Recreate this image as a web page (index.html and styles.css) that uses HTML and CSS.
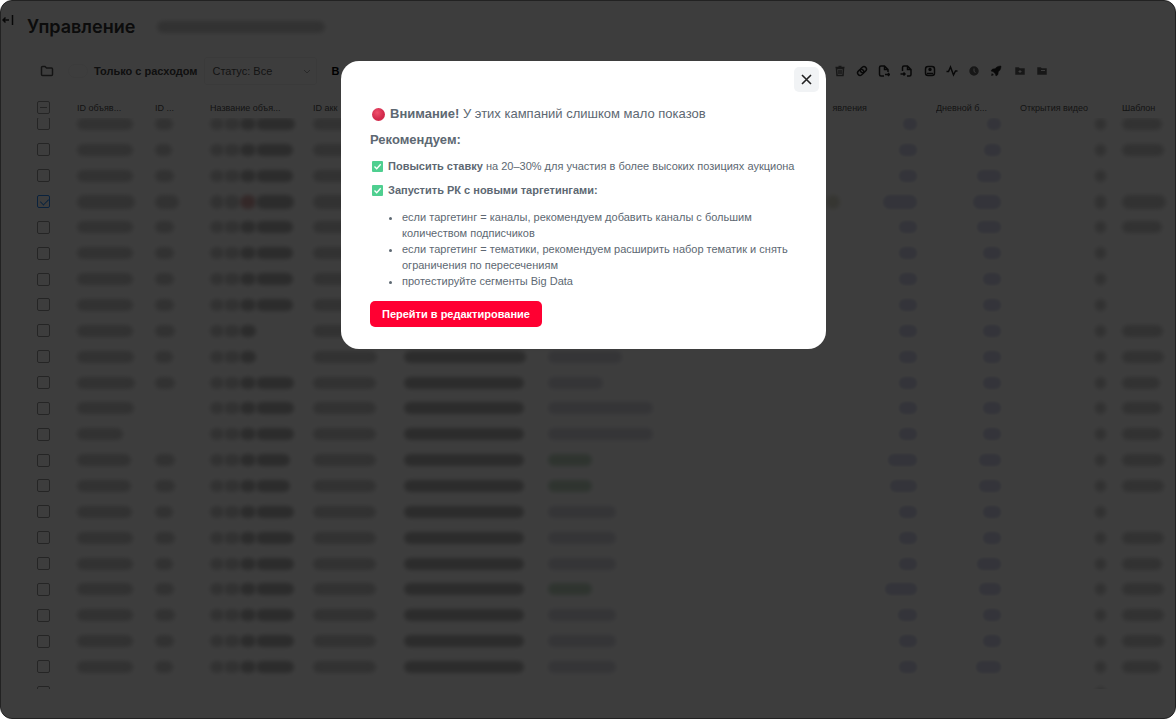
FILE: index.html
```
<!DOCTYPE html>
<html lang="ru">
<head>
  <meta charset="UTF-8">
  <meta name="viewport" content="width=device-width, initial-scale=1.0">
  <title>Управление</title>
  <link rel="stylesheet" href="styles.css">
</head>
<body>
  <div class="page">
    <header class="header">
      <button class="icon-btn collapse" aria-label="Развернуть меню">
        <svg width="12" height="12" viewBox="0 0 12 12"><path d="M7 6H1M3.500 3.500L1 6l2.500 2.500M10.500 1v10"/></svg>
      </button>
      <h1>Управление</h1>
      <span class="account blob"></span>
    </header>

    <div class="toolbar">
      <button class="icon-btn folder" aria-label="Папки">
        <svg width="14" height="12" viewBox="0 0 14 12"><path d="M1.500 9.500v-7a1 1 0 0 1 1-1h2.500l1.500 1.500h5a1 1 0 0 1 1 1v5.500a1 1 0 0 1-1 1h-9a1 1 0 0 1-1-1z"/></svg>
      </button>
      <label class="spend"><input type="checkbox" class="switch">Только с расходом</label>
      <div class="status-box">
        <select class="status" aria-label="Статус">
          <option>Статус: Все</option>
        </select>
        <svg class="chevron" width="8" height="5" viewBox="0 0 8 5"><path d="M1 1l3 3 3-3"/></svg>
      </div>
      <span class="period">В</span>
      <div class="actions">
        <button class="icon-btn dim" aria-label="Удалить"><svg viewBox="0 0 12 12"><path d="M2.500 3.500h7L9 10.500H3zM1.500 2.500h9M4.500 1.500h3M5 5v4M7 5v4"/></svg></button>
        <button class="icon-btn" aria-label="Ссылка"><svg viewBox="0 0 12 12"><rect x="4" y="2" width="6.500" height="5" rx="2.500" transform="rotate(-40 7.500 4.500)"/><rect x="1.500" y="5" width="6.500" height="5" rx="2.500" transform="rotate(-40 4.500 7.500)"/></svg></button>
        <button class="icon-btn" aria-label="Экспорт"><svg viewBox="0 0 12 12"><path d="M6 11H3a1.500 1.500 0 0 1-1.500-1.500v-7A1.500 1.500 0 0 1 3 1h3.500L10 4.500V7M6.500 1v3.500H10M7 9.500h4.500M10 8l1.500 1.500L10 11"/></svg></button>
        <button class="icon-btn" aria-label="Импорт"><svg viewBox="0 0 12 12"><path d="M2.500 6V2.500A1.500 1.500 0 0 1 4 1h3.500L11 4.500v5A1.500 1.500 0 0 1 9.500 11H7M7.500 1v3.500H11M.5 9h4.500M3.500 7.500L5 9l-1.500 1.500"/></svg></button>
        <button class="icon-btn gap" aria-label="Аудитория"><svg viewBox="0 0 12 12"><rect x="1.500" y="1.500" width="9" height="9" rx="2.500"/><circle class="fill" cx="6" cy="4.500" r="1"/><path d="M3 8.500h6"/></svg></button>
        <button class="icon-btn" aria-label="Активность"><svg viewBox="0 0 12 12"><path d="M.5 6.500h2L4.500 2l3 8 2-4h2"/></svg></button>
        <button class="icon-btn dim" aria-label="Расписание"><svg viewBox="0 0 12 12"><circle class="fill" cx="6" cy="6" r="4"/><path class="light" d="M6 3.500V6.500l1.500 1"/></svg></button>
        <button class="icon-btn" aria-label="Запустить"><svg viewBox="0 0 12 12"><path class="fill thin" d="M11 1C8 1 6.500 2 5 3.800L2.500 4 1 6l2 .5L5.500 9l.5 2 2-1.500.2-2.500C10 5.500 11 4 11 1zM2 8.500L1.500 10.500 3.500 10z"/></svg></button>
        <button class="icon-btn dim gap" aria-label="Добавить в папку"><svg viewBox="0 0 12 12"><path class="fill" d="M2 3h2.500l1 1H10v5H2z"/><path class="light" d="M6 5v3M4.500 6.500h3"/></svg></button>
        <button class="icon-btn dim" aria-label="Папка"><svg viewBox="0 0 12 12"><path class="fill" d="M2 3h2.500l1 1H10v5H2z"/><path class="light" d="M5 5.500h4"/></svg></button>
      </div>
    </div>

    <div class="table-wrap" id="wrap">
      <table>
        <colgroup>
          <col class="c-check"><col class="c-id"><col class="c-num"><col class="c-name"><col class="c-acc"><col class="c-client"><col><col class="c-bid"><col class="c-day"><col class="c-video"><col class="c-tpl">
        </colgroup>
        <thead>
          <tr>
            <th><input type="checkbox" id="all" aria-label="Выбрать все"></th>
            <th>ID объяв...</th>
            <th>ID ...</th>
            <th>Название объя...</th>
            <th>ID акк</th>
            <th aria-label="Клиент"></th>
            <th aria-label="Статус"></th>
            <th class="bid-head">явления</th>
            <th>Дневной б...</th>
            <th>Открытия видео</th>
            <th>Шаблон</th>
          </tr>
        </thead>
        <tbody id="rows"></tbody>
      </table>
    </div>
  </div>

  <div class="overlay">
    <div class="modal" role="dialog" aria-modal="true" aria-labelledby="modal-title">
      <button class="close" aria-label="Закрыть">
        <svg width="11" height="11" viewBox="0 0 11 11"><path d="M1 1l9 9M10 1l-9 9"/></svg>
      </button>
      <p class="lead" id="modal-title">
        <svg class="dot" width="13" height="13" viewBox="0 0 13 13">
          <defs><radialGradient id="red" cx="40%" cy="35%"><stop offset="0" stop-color="#f0506c"/><stop offset="1" stop-color="#d22a4c"/></radialGradient></defs>
          <circle cx="6.500" cy="6.500" r="6.500" fill="url(#red)"/>
        </svg>
        <span><b>Внимание!</b> У этих кампаний слишком мало показов</span>
      </p>
      <p class="lead"><b>Рекомендуем:</b></p>
      <p class="tip">
        <svg class="tick" width="11" height="11" viewBox="0 0 11 11"><rect width="11" height="11" rx="1"/><path d="M2.500 5.500l2.200 2.200 4-4.400"/></svg>
        <span><b>Повысить ставку</b> на 20–30% для участия в более высоких позициях аукциона</span>
      </p>
      <p class="tip last">
        <svg class="tick" width="11" height="11" viewBox="0 0 11 11"><rect width="11" height="11" rx="1"/><path d="M2.500 5.500l2.200 2.200 4-4.400"/></svg>
        <b>Запустить РК с новыми таргетингами:</b>
      </p>
      <ul>
        <li>если таргетинг = каналы, рекомендуем добавить каналы с большим количеством подписчиков</li>
        <li>если таргетинг = тематики, рекомендуем расширить набор тематик и снять ограничения по пересечениям</li>
        <li>протестируйте сегменты Big Data</li>
      </ul>
      <button class="primary">Перейти в редактирование</button>
    </div>
  </div>
  <script src="script.js"></script>
</body>
</html>
```
FILE: styles.css
```
* {
  box-sizing: border-box;
}
body {
  margin: 0;
  height: 100vh;
  position: relative;
  overflow: hidden;
  background: #fff;
  font-family: "Liberation Sans", Arial, sans-serif;
}
button,
select {
  font-family: inherit;
}
.page {
  height: 100vh;
  display: flex;
  flex-direction: column;
  padding-bottom: 30px;
}
.header {
  display: flex;
  align-items: center;
  height: 54px;
}
h1 {
  margin: 0 22px 0 12px;
  font-family: Inter, sans-serif;
  font-size: 18px;
  line-height: 24px;
  font-weight: 600;
  color: #333;
}
.icon-btn {
  display: flex;
  padding: 0;
  border: none;
  background: none;
}
.icon-btn svg {
  fill: none;
  stroke: #222;
  stroke-width: 1.5;
}
.icon-btn .fill {
  fill: #222;
}
.icon-btn .thin {
  stroke-width: 0.5;
}
.icon-btn .light {
  stroke: #fff;
  stroke-width: 1;
}
.dim {
  opacity: 0.7;
}
.collapse {
  margin: 0 1px 14px 2px;
}
.blob {
  display: inline-block;
  height: 12px;
  border-radius: 6px;
  background: #d0d0d0;
  filter: blur(2px);
}
.account {
  width: 168px;
}
.toolbar {
  display: flex;
  align-items: center;
  height: 34px;
  padding: 0 128px 0 40px;
}
.folder {
  margin-right: 14px;
}
.folder svg {
  stroke: #555;
}
.spend {
  display: flex;
  align-items: center;
  gap: 6px;
  margin-right: 7px;
  font-size: 11px;
  font-weight: 600;
  color: #444;
}
.switch {
  appearance: none;
  width: 20px;
  height: 14px;
  margin: 0;
  border: 1px solid #f4f4f4;
  border-radius: 7px;
}
.status-box {
  position: relative;
  width: 113px;
}
.status {
  appearance: none;
  width: 100%;
  height: 28px;
  padding: 0 7px;
  border: 1px solid #f0f0f0;
  border-radius: 3px;
  background: none;
  font-size: 11px;
  color: #555;
}
.chevron {
  position: absolute;
  top: 12px;
  right: 6px;
  fill: none;
  stroke: #aaa;
}
.period {
  margin-left: 14px;
  font-size: 11px;
  font-weight: 600;
}
.actions {
  display: flex;
  gap: 10px;
  margin-left: auto;
}
.actions svg {
  width: 12px;
  height: 12px;
}
.actions .gap {
  margin-left: 2px;
}

/* campaign table */
.table-wrap {
  flex: 1;
  min-height: 0;
  margin-top: 9px;
  overflow: hidden;
}
table {
  width: 100%;
  height: calc(100vh - 103px);
  table-layout: fixed;
  border-collapse: collapse;
}
.c-check { width: 77px; }
.c-id { width: 78px; }
.c-num { width: 55px; }
.c-name { width: 103px; }
.c-acc { width: 91px; }
.c-client { width: 144px; }
.c-bid { width: 140px; }
.c-day { width: 84px; }
.c-video { width: 102px; }
.c-tpl { width: 54px; }
th {
  position: sticky;
  top: 0;
  z-index: 1;
  height: 21px;
  padding: 0;
  background: #fff;
  font-size: 9px;
  font-weight: 400;
  text-align: left;
  white-space: nowrap;
  color: #555;
}
th.bid-head {
  padding-right: 69px;
  text-align: right;
}
td {
  padding: 0;
  line-height: 0;
  white-space: nowrap;
}
th:first-child,
td:first-child {
  padding-left: 37px;
}
table input {
  appearance: none;
  display: block;
  width: 13px;
  height: 13px;
  margin: 0;
  border: 1px solid #999;
  border-radius: 2px;
}
table input:indeterminate {
  background: linear-gradient(#999, #999) center / 7px 1px no-repeat;
}
table input:checked {
  border-color: #2a90ff;
}
table input:checked::before {
  content: "";
  display: block;
  width: 4px;
  height: 7px;
  margin: 1px 0 0 4px;
  border: solid #2a90ff;
  border-width: 0 1px 1px 0;
  transform: rotate(45deg);
}
.name {
  display: flex;
}
.dark { background: #b8b8b8; }
.grey { background: #dcdce4; }
.green { background: #c4dac6; }
.blue { background: #d8daf0; filter: blur(1px); }
.red { background: #d8a8a8; }
.yellow { background: #e0e0d0; margin-right: 43px; }
.right { text-align: right; padding-right: 19px; }
.video { text-align: right; padding-right: 16px; }
/* bigger blobs, same row height */
.selected .blob {
  height: 14px;
  margin-top: -1px;
  margin-bottom: -1px;
  border-radius: 7px;
}

/* modal */
.overlay {
  position: absolute;
  inset: 0;
  z-index: 2;
  display: flex;
  justify-content: center;
  align-items: flex-start;
  padding: 60px 9px 0 0;
  border: 1px solid #222;
  border-radius: 12px;
  background: rgba(0, 0, 0, 0.76);
}
.modal {
  position: relative;
  width: 485px;
  padding: 43px 28px 22px 29px;
  border-radius: 18px;
  background: #fff;
  color: #5d6872;
}
.modal p {
  display: flex;
  align-items: center;
  margin: 0 0 6px;
  line-height: 20px;
  white-space: nowrap;
}
.modal .lead {
  font-size: 13px;
}
.modal .tip {
  margin-bottom: 4px;
  font-size: 11px;
}
.modal .last {
  margin-bottom: 9px;
}
.dot {
  flex: none;
  margin: 0 5px 0 2px;
}
.tick {
  flex: none;
  margin: 0 5px 0 2px;
  fill: #4fcf90;
}
.tick path {
  fill: none;
  stroke: #fff;
  stroke-width: 1.4;
}
.modal ul {
  margin: 0 0 12px;
  padding-left: 32px;
  font-size: 11px;
  line-height: 16px;
}
.close {
  position: absolute;
  top: 6px;
  right: 7px;
  display: flex;
  align-items: center;
  justify-content: center;
  width: 25px;
  height: 25px;
  padding: 0;
  border: none;
  border-radius: 5px;
  background: #f1f3f5;
}
.close svg {
  stroke: #222;
  stroke-width: 1.6;
}
.primary {
  display: block;
  height: 26px;
  padding: 0 12px;
  border: none;
  border-radius: 5px;
  background: #ff0032;
  color: #fff;
  font-size: 11px;
  font-weight: 600;
}
```
FILE: script.js
```
// [id, num, name, account, client, status, status colour, bid, daily, template]
const data = [
  [56, 18, 85, 62, 120, 74, 'grey', 14, 14, 40],
  [56, 17, 83, 62, 120, 74, 'grey', 18, 17, 42],
  [56, 19, 83, 62, 120, 74, 'grey', 18, 24, 0],
  [58, 24, 84, 64, 120, 74, 'grey', 34, 28, 44],
  [56, 19, 83, 62, 120, 74, 'grey', 18, 24, 40],
  [56, 19, 83, 62, 120, 74, 'grey', 18, 18, 0],
  [56, 19, 83, 62, 120, 74, 'grey', 18, 18, 0],
  [56, 19, 83, 62, 120, 74, 'grey', 18, 18, 0],
  [56, 20, 46, 62, 120, 74, 'grey', 18, 18, 41],
  [57, 18, 46, 64, 122, 74, 'grey', 18, 18, 42],
  [58, 20, 84, 63, 120, 55, 'grey', 18, 18, 38],
  [57, 0, 84, 63, 120, 105, 'grey', 18, 18, 40],
  [46, 0, 84, 63, 120, 105, 'grey', 18, 18, 40],
  [54, 20, 80, 63, 120, 44, 'green', 29, 22, 42],
  [54, 20, 80, 63, 120, 44, 'green', 27, 22, 42],
  [55, 18, 84, 63, 120, 68, 'grey', 18, 18, 0],
  [56, 20, 84, 63, 120, 68, 'grey', 18, 18, 42],
  [56, 18, 84, 63, 120, 68, 'grey', 18, 24, 40],
  [56, 19, 84, 63, 120, 44, 'green', 32, 22, 42],
  [56, 20, 84, 63, 120, 68, 'grey', 19, 18, 42],
  [56, 19, 84, 63, 120, 68, 'grey', 18, 18, 42],
  [56, 18, 84, 63, 120, 68, 'grey', 18, 25, 39],
  [0, 0, 0, 0, 0, 0, 'grey', 0, 0, 0]
];
const selected = 3;

const blob = (width, cls = '') =>
  width ? `<span class="blob ${cls}" style="width:${width}px"></span>` : '';

const nameCell = (width, isSelected) => {
  if (!width) return '';
  return blob(14) + blob(16) + blob(16, isSelected ? 'red' : 'dark') + blob(width - 46, 'dark');
};

document.getElementById('rows').innerHTML = data.map((r, i) => `
  <tr class="${i === selected ? 'selected' : ''}">
    <td><input type="checkbox" aria-label="Строка ${i + 1}" ${i === selected ? 'checked' : ''}></td>
    <td>${blob(r[0])}</td>
    <td>${blob(r[1])}</td>
    <td><div class="name">${nameCell(r[2], i === selected)}</div></td>
    <td>${blob(r[3])}</td>
    <td>${blob(r[4], 'dark')}</td>
    <td>${blob(r[5], r[6])}</td>
    <td class="right">${i === selected ? blob(14, 'yellow') : ''}${blob(r[7], 'blue')}</td>
    <td class="right">${blob(r[8], 'blue')}</td>
    <td class="video">${r[0] || i === data.length - 1 ? blob(11) : ''}</td>
    <td>${blob(r[9])}</td>
  </tr>`).join('');

document.getElementById('all').indeterminate = true;
document.getElementById('wrap').scrollTop = 7;
```
